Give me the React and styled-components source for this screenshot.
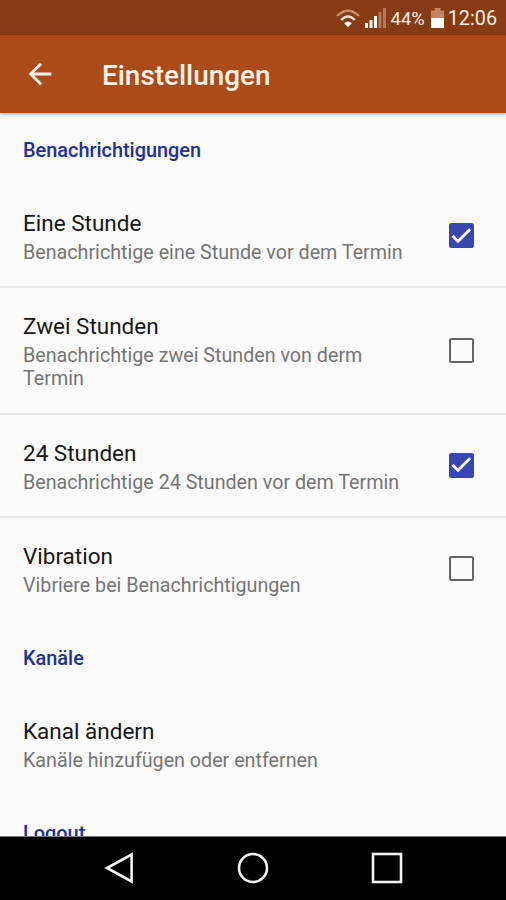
import React, { useState } from 'react'
import styled, { createGlobalStyle } from 'styled-components'

const GlobalStyle = createGlobalStyle`
  * {
    box-sizing: border-box;
  }
  body {
    margin: 0;
    background: #fafafa;
    font-family: Roboto, sans-serif;
  }
`

const Screen = styled.div`
  display: flex;
  flex-direction: column;
  width: 506px;
  height: 900px;
  overflow: hidden;
  background: #fafafa;
`

const StatusBar = styled.div`
  flex: none;
  display: flex;
  align-items: center;
  justify-content: flex-end;
  height: 35px;
  padding: 0 9px 0 0;
  background: #863b13;
  color: #fbeee6;
  font-size: 19px;
  line-height: 35px;
`

const Percent = styled.span`
  margin: 0 6px 0 5px;
  padding-top: 2px;
  font-size: 18.4px;
`

const Clock = styled.span`
  margin-left: 4px;
  padding-top: 2px;
  font-size: 19.8px;
`

const Toolbar = styled.header`
  flex: none;
  display: flex;
  align-items: center;
  height: 78px;
  padding-left: 23px;
  background: #ab4b1a;
  color: #fff4ec;
  box-shadow: 0 1px 3px rgba(0, 0, 0, 0.35);
  z-index: 1;
`

const BackButton = styled.button`
  display: flex;
  padding: 0;
  border: none;
  background: none;
  color: inherit;
  cursor: pointer;
`

const Title = styled.h1`
  margin: 3px 0 0 45px;
  font-size: 27.9px;
  font-weight: 500;
  line-height: 34px;
`

const Content = styled.main`
  flex: 1;
  min-height: 0;
  overflow: hidden;
`

const Category = styled.h2`
  height: 72px;
  margin: 0;
  padding: 26px 23px 0;
  color: #20319a;
  font-size: 19.9px;
  font-weight: 500;
  line-height: 24px;
`

const Row = styled.div`
  display: flex;
  align-items: center;
  padding: 24px 32px 22.3px 23px;
  border-bottom: 2px solid ${(props) => (props.$divider ? '#e6e6e6' : 'transparent')};
  cursor: pointer;
`

const Text = styled.div`
  flex: 1;
  padding-right: 40px;
`

const Label = styled.div`
  color: #161616;
  font-size: 22.5px;
  line-height: 28px;
`

const Summary = styled.div`
  margin-top: 4px;
  color: #757575;
  font-size: 19.7px;
  line-height: 23px;
`

const Box = styled.span`
  flex: none;
  display: flex;
  align-items: center;
  justify-content: center;
  width: 25px;
  height: 25px;
  margin-bottom: 2px;
  border: 2px solid ${(props) => (props.$checked ? '#3747ae' : '#646464')};
  border-radius: 2.5px;
  background: ${(props) => (props.$checked ? '#3747ae' : 'transparent')};
`

const NavBar = styled.nav`
  flex: none;
  display: flex;
  align-items: center;
  justify-content: center;
  gap: 102px;
  height: 64px;
  padding-bottom: 1px;
  border-top: 1px solid #777;
  background: #000;
`

const WifiIcon = styled(({ className }) => (
  <svg className={className} width='24' height='20' viewBox='0 0 24 20' fill='none'>
    <path d='M1 8Q12-2.5 23 8' stroke='#c48b6c' strokeWidth='2.4' />
    <path d='M5.2 12Q12 5 18.8 12' stroke='#f3e0d5' strokeWidth='2.4' />
    <path d='M8.2 15.2Q12 11.6 15.8 15.2L12 19.2Z' fill='#fff' />
  </svg>
))`
  margin-right: 5px;
`

const SignalIcon = () => (
  <svg width='21' height='20' viewBox='0 0 21 20'>
    <path d='M0 15h3v5H0zM4.5 12h3v8h-3zM9 8h3v12H9z' fill='#fff' />
    <path d='M13.5 4h3v16h-3zM18 0h3v20h-3z' fill='#b87856' />
  </svg>
)

const BatteryIcon = () => (
  <svg width='13' height='20' viewBox='0 0 13 20'>
    <path d='M3.5 0h6v2.5H13V10H0V2.5h3.5z' fill='#c08666' />
    <path d='M0 10h13v10H0z' fill='#fff' />
  </svg>
)

const ArrowIcon = () => (
  <svg width='34' height='34' viewBox='0 0 24 24' fill='currentColor'>
    <path d='M20 11H7.83l5.59-5.59L12 4l-8 8 8 8 1.41-1.41L7.83 13H20v-2z' />
  </svg>
)

const CheckIcon = () => (
  <svg width='21' height='20' viewBox='0 0 21 20' fill='none'>
    <path d='M1.4 9.7l5.6 5.6L19.1 3.2' stroke='#fff' strokeWidth='2.8' />
  </svg>
)

const NavIcon = ({ children }) => (
  <svg width='32' height='32' viewBox='0 0 32 32' fill='none' stroke='#f2f2f2' strokeWidth='2.6'>
    {children}
  </svg>
)

const notifications = [
  { id: 'one', label: 'Eine Stunde', summary: 'Benachrichtige eine Stunde vor dem Termin' },
  { id: 'two', label: 'Zwei Stunden', summary: 'Benachrichtige zwei Stunden von derm Termin' },
  { id: 'day', label: '24 Stunden', summary: 'Benachrichtige 24 Stunden vor dem Termin' },
  { id: 'vibration', label: 'Vibration', summary: 'Vibriere bei Benachrichtigungen' },
]

const Preference = ({ label, summary, checked, divider, onClick }) => (
  <Row $divider={divider} onClick={onClick}>
    <Text>
      <Label>{label}</Label>
      <Summary>{summary}</Summary>
    </Text>
    {checked !== undefined && (
      <Box $checked={checked} role='checkbox' aria-checked={checked}>
        {checked && <CheckIcon />}
      </Box>
    )}
  </Row>
)

const App = () => {
  const [settings, setSettings] = useState({ one: true, two: false, day: true, vibration: false })

  const toggle = (id) => setSettings({ ...settings, [id]: !settings[id] })

  return (
    <Screen>
      <GlobalStyle />
      <StatusBar>
        <WifiIcon />
        <SignalIcon />
        <Percent>44%</Percent>
        <BatteryIcon />
        <Clock>12:06</Clock>
      </StatusBar>
      <Toolbar>
        <BackButton>
          <ArrowIcon />
        </BackButton>
        <Title>Einstellungen</Title>
      </Toolbar>
      <Content>
        <Category>Benachrichtigungen</Category>
        {notifications.map((item, index) => (
          <Preference
            key={item.id}
            label={item.label}
            summary={item.summary}
            checked={settings[item.id]}
            divider={index < notifications.length - 1}
            onClick={() => toggle(item.id)}
          />
        ))}
        <Category>Kanäle</Category>
        <Preference label='Kanal ändern' summary='Kanäle hinzufügen oder entfernen' />
        <Category>Logout</Category>
      </Content>
      <NavBar>
        <NavIcon>
          <path d='M28.6 2.5v27L4 16z' />
        </NavIcon>
        <NavIcon>
          <circle cx='16' cy='16' r='14' />
        </NavIcon>
        <NavIcon>
          <rect x='2' y='2' width='28' height='28' />
        </NavIcon>
      </NavBar>
    </Screen>
  )
}

export default App
